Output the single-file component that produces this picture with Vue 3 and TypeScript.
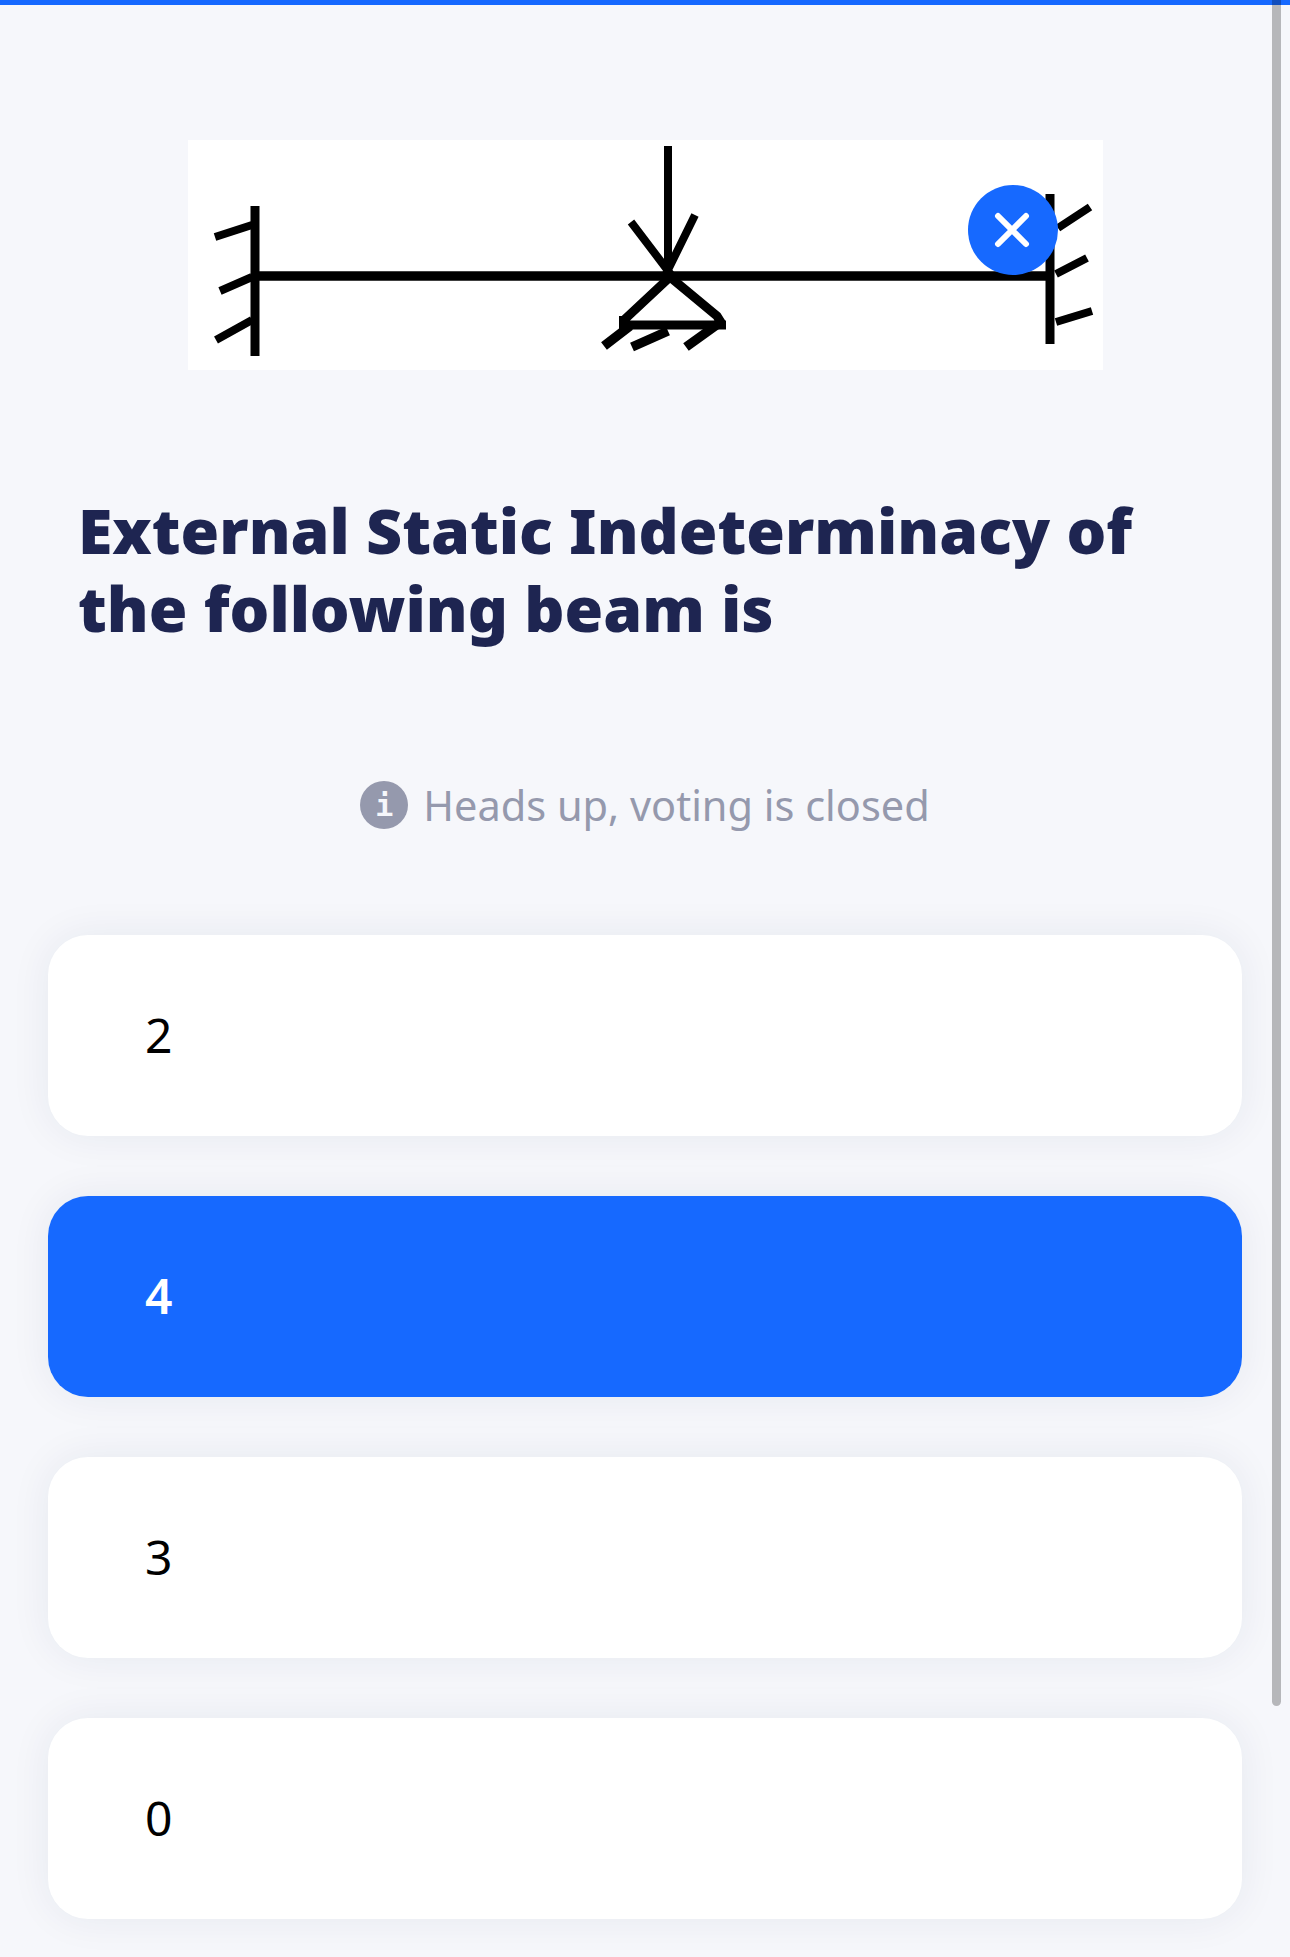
<script setup lang="ts">
const options = [
  { label: '2', selected: false },
  { label: '4', selected: true },
  { label: '3', selected: false },
  { label: '0', selected: false },
]
</script>

<template>
  <div class="page">
    <div class="topbar"></div>
    <div class="scrollbar"></div>
    <div class="figure">
      <svg class="beam" viewBox="188 140 915 230" width="915" height="230">
        <g stroke="#000" fill="none" stroke-linecap="butt">
          <path d="M255 206V356M1050 194V344" stroke-width="9" />
          <path d="M255 276H1050" stroke-width="9.5" />
          <path d="M668 146V270" stroke-width="8" />
          <path d="M631 222L672 276M695 215L665 276" stroke-width="8" />
          <path d="M670 277L624 320M670 277L717 316L722 324M620 325H726" stroke-width="9" />
          <path d="M623 316V334" stroke-width="8" />
          <path d="M215 237L252 225M220 291L252 277M216 340L252 320" stroke-width="8" />
          <path d="M1058 228L1090 207M1056 274L1087 258M1056 322L1092 311" stroke-width="8" />
          <path d="M604 346L630 326M632 347L668 331M686 347L718 324" stroke-width="9.5" />
        </g>
      </svg>
      <div class="close">
        <svg viewBox="0 0 90 90" width="90" height="90">
          <path d="M30 32L58 60M58 32L30 60" transform="translate(0 -1)" stroke="#fff" stroke-width="6" stroke-linecap="round" />
        </svg>
      </div>
    </div>
    <h1 class="title">External Static Indeterminacy of the following beam is</h1>
    <div class="notice">
      <span class="info">i</span>
      <span>Heads up, voting is closed</span>
    </div>
    <div class="options">
      <div v-for="o in options" :key="o.label" class="option" :class="{ selected: o.selected }">{{ o.label }}</div>
    </div>
  </div>
</template>

<style>
html, body { margin: 0; background: #f6f7fb; }
</style>

<style scoped>
.page {
  position: relative;
  box-sizing: border-box;
  width: 1290px;
  height: 1957px;
  overflow: hidden;
  background: #f6f7fb;
  font-family: "Noto Sans", sans-serif;
}
.topbar {
  height: 5px;
  background: #1669ff;
}
.scrollbar {
  position: absolute;
  top: 0;
  left: 1272px;
  width: 9px;
  height: 1706px;
  border-radius: 0 0 5px 5px;
  background: rgba(0, 0, 0, 0.26);
}
.figure {
  position: relative;
  width: 915px;
  height: 230px;
  margin: 135px 0 0 188px;
  background: #fff;
}
.beam { display: block; filter: blur(0.6px); }
.close {
  position: absolute;
  left: 780px;
  top: 45px;
  width: 90px;
  height: 90px;
  border-radius: 50%;
  background: #1669ff;
}
.close svg { display: block; }
.title {
  margin: 121px 120px 0 78px;
  font-family: "Noto Sans", sans-serif;
  font-size: 62.6px;
  line-height: 78px;
  font-weight: 900;
  color: #1e2551;
}
.notice {
  display: flex;
  align-items: center;
  justify-content: center;
  gap: 15px;
  margin-top: 128px;
  height: 60px;
  font-family: "Noto Sans", sans-serif;
  font-size: 41.5px;
  color: #9599ad;
}
.info {
  display: flex;
  align-items: center;
  justify-content: center;
  width: 48px;
  height: 48px;
  border-radius: 50%;
  background: #9599ad;
  color: #f6f7fb;
  font-family: "DejaVu Sans Mono", monospace;
  font-size: 30px;
  font-weight: 700;
}
.options {
  display: flex;
  flex-direction: column;
  gap: 60px;
  margin: 100px 48px 0;
}
.option {
  box-sizing: border-box;
  display: flex;
  align-items: center;
  height: 201px;
  padding: 0 0 3px 97px;
  border-radius: 40px;
  background: #fff;
  color: #000;
  font-size: 48px;
  box-shadow: 0 0 40px rgba(30, 37, 81, 0.07);
}
.option.selected {
  background: #1669ff;
  color: #fff;
  font-weight: 600;
}
</style>
